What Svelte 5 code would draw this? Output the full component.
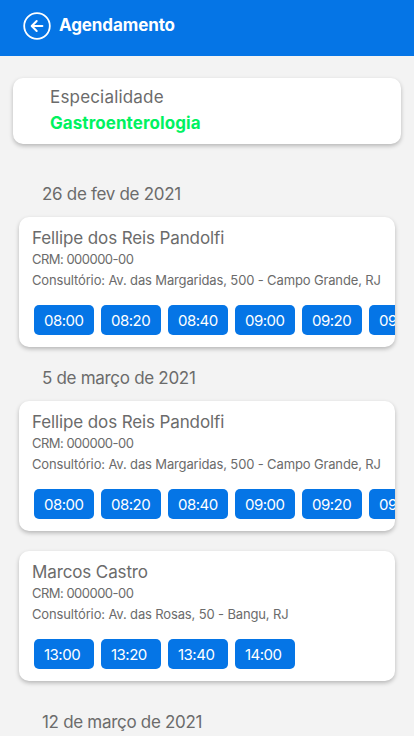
<script lang="ts">
    interface Doctor {
        name: string;
        crm: string;
        office: string;
        times: string[];
    }

    interface Day {
        date: string;
        doctors: Doctor[];
    }

    const specialty = 'Gastroenterologia';

    const fellipe: Doctor = {
        name: 'Fellipe dos Reis Pandolfi',
        crm: '000000-00',
        office: 'Av. das Margaridas, 500 - Campo Grande, RJ',
        times: ['08:00', '08:20', '08:40', '09:00', '09:20', '09:40']
    };

    const marcos: Doctor = {
        name: 'Marcos Castro',
        crm: '000000-00',
        office: 'Av. das Rosas, 50 - Bangu, RJ',
        times: ['13:00', '13:20', '13:40', '14:00']
    };

    const days: Day[] = [
        { date: '26 de fev de 2021', doctors: [fellipe] },
        { date: '5 de março de 2021', doctors: [fellipe, marcos] },
        { date: '12 de março de 2021', doctors: [] }
    ];
</script>

<div class="screen">
    <header class="topbar">
        <button class="back" aria-label="Voltar">
            <svg width="28" height="28" viewBox="0 0 28 28" fill="none" stroke="#fff">
                <circle cx="14" cy="14" r="12.8" stroke-width="1.8" />
                <path d="M19.4 14H9M13.7 9L8.7 14l5 5" stroke-width="2" stroke-linecap="round" stroke-linejoin="round" />
            </svg>
        </button>
        <h1>Agendamento</h1>
    </header>

    <section class="specialty">
        <span class="specialty-label">Especialidade</span>
        <strong>{specialty}</strong>
    </section>

    <main>
        {#each days as day}
            <h2>{day.date}</h2>
            <div class="cards" class:stacked={day.doctors.length > 1}>
                {#each day.doctors as doctor}
                    <article class="card">
                        <h3>{doctor.name}</h3>
                        <p class="crm">CRM: {doctor.crm}</p>
                        <p class="office">Consultório: {doctor.office}</p>
                        <div class="times">
                            {#each doctor.times as time}
                                <button class="time">{time}</button>
                            {/each}
                        </div>
                    </article>
                {/each}
            </div>
        {/each}
    </main>
</div>

<style>
    :global(body) {
        margin: 0;
        overflow: hidden;
    }

    .screen {
        height: 736px;
        overflow: hidden;
        background: #f3f3f3;
        color: #6b6b6b;
        font-family: Inter, sans-serif;
    }

    .topbar {
        display: flex;
        align-items: center;
        height: 56px;
        padding: 0 23px 4px;
        box-sizing: border-box;
        gap: 8px;
        background: #0575e6;
        color: #fff;
    }

    .back {
        display: flex;
        padding: 0;
        border: none;
        background: none;
    }

    h1 {
        margin: -2px 0 0;
        font-size: 17px;
        font-weight: 700;
        line-height: 26px;
        letter-spacing: -0.1px;
    }

    .specialty {
        display: flex;
        flex-direction: column;
        height: 66px;
        margin: 22px 13px 0;
        padding: 6px 37px 0;
        box-sizing: border-box;
        border-radius: 10px;
        background: #fff;
        box-shadow: 0 2px 4px rgba(0, 0, 0, 0.25);
        font-size: 17px;
        line-height: 26px;
    }

    .specialty-label {
        letter-spacing: 0.18px;
    }

    .specialty strong {
        color: #00f260;
        font-weight: 700;
        letter-spacing: 0.07px;
    }

    main {
        padding: 37px 19px 0;
    }

    h2 {
        margin: 0 0 10px 23px;
        font-size: 17px;
        font-weight: 400;
        line-height: 26px;
        letter-spacing: -0.3px;
    }

    .cards {
        display: flex;
        flex-direction: column;
        gap: 20px;
        margin-bottom: 18px;
    }

    .cards.stacked {
        margin-bottom: 28px;
    }

    .card {
        height: 130px;
        padding: 10px 0 0 13px;
        box-sizing: border-box;
        overflow: hidden;
        border-radius: 10px;
        background: #fff;
        box-shadow: 0 2px 4px rgba(0, 0, 0, 0.25);
        white-space: nowrap;
    }

    .card h3 {
        margin: 0;
        font-size: 17px;
        font-weight: 400;
        line-height: 22px;
        letter-spacing: -0.12px;
    }

    .card p {
        margin: 0;
        font-size: 13px;
        line-height: 21px;
    }

    .card .crm {
        letter-spacing: -0.52px;
    }

    .card .office {
        letter-spacing: -0.14px;
    }

    .times {
        display: flex;
        gap: 7px;
        margin: 14px 0 0 2px;
    }

    .time {
        flex: none;
        width: 60px;
        height: 30px;
        padding: 0 0 0 10px;
        border: none;
        border-radius: 5px;
        background: #0575e6;
        color: #fff;
        font-family: inherit;
        font-size: 15px;
        letter-spacing: -0.5px;
        text-align: left;
    }
</style>
